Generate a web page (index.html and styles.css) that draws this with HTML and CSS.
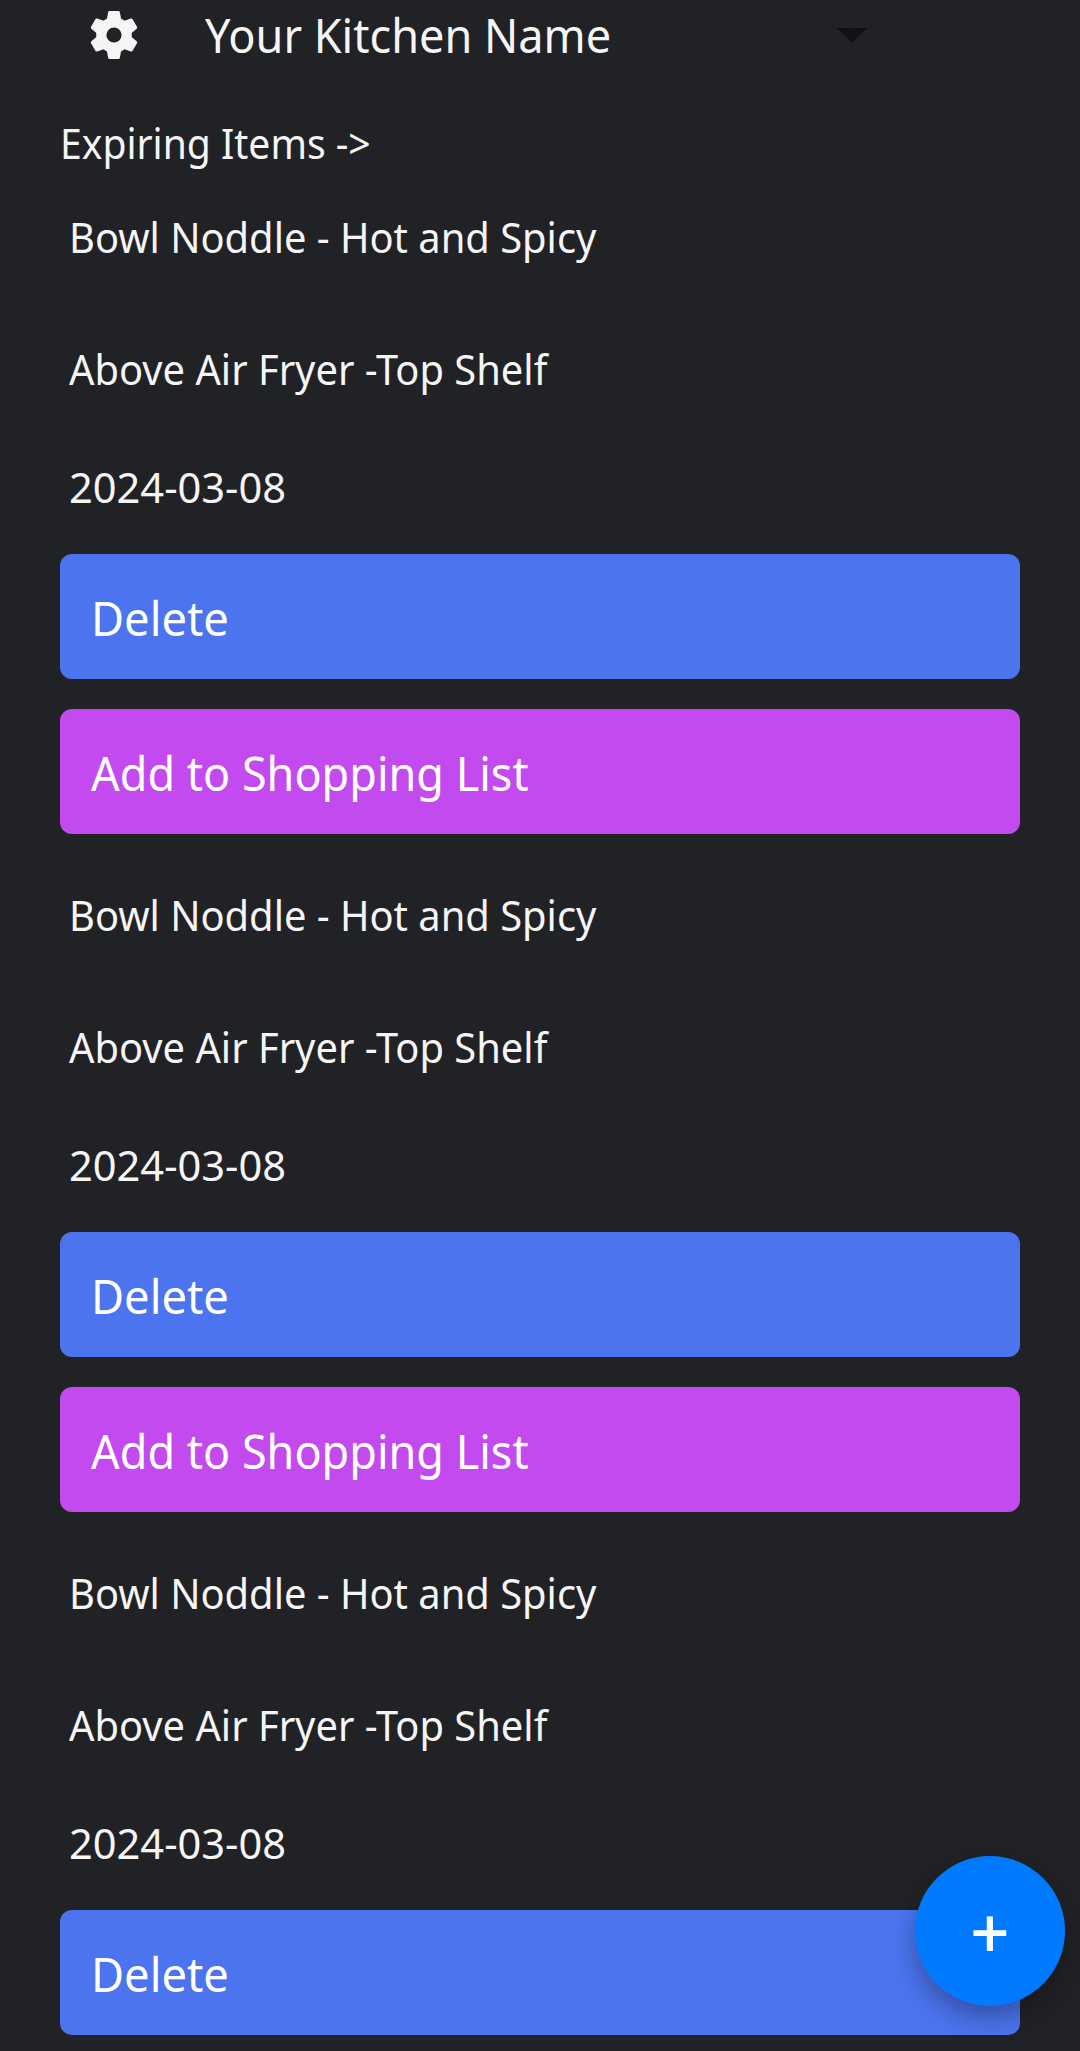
FILE: index.html
```
<!DOCTYPE html>
<html lang="en">
<head>
<meta charset="utf-8">
<title>Kitchen</title>
<link rel="stylesheet" href="styles.css">
</head>
<body>
<header class="topbar">
  <svg class="gear" viewBox="-30 -30 60 60" aria-hidden="true">
    <defs><path id="teeth" d="M-4.4-22.5H4.4L5.6-16V16L4.4 22.5H-4.4L-5.6 16V-16z"/></defs>
    <use href="#teeth"/>
    <use href="#teeth" transform="rotate(60)"/>
    <use href="#teeth" transform="rotate(120)"/>
    <circle class="hub" r="17.8"/>
    <circle class="hole" r="7.6"/>
  </svg>
  <span class="kitchen">Your Kitchen Name</span>
  <svg class="caret" viewBox="0 0 30 15" aria-hidden="true"><path d="M0 0h30L15 15z"/></svg>
</header>
<main class="content">
  <h1 class="section"><span>Expiring Items -&gt;</span></h1>
  <article class="item">
    <p class="name"><span>Bowl Noddle - Hot and Spicy</span></p>
    <p class="place"><span>Above Air Fryer -Top Shelf</span></p>
    <p class="date"><span>2024-03-08</span></p>
    <button class="btn delete"><span>Delete</span></button>
    <button class="btn add"><span>Add to Shopping List</span></button>
  </article>
  <article class="item">
    <p class="name"><span>Bowl Noddle - Hot and Spicy</span></p>
    <p class="place"><span>Above Air Fryer -Top Shelf</span></p>
    <p class="date"><span>2024-03-08</span></p>
    <button class="btn delete"><span>Delete</span></button>
    <button class="btn add"><span>Add to Shopping List</span></button>
  </article>
  <article class="item">
    <p class="name"><span>Bowl Noddle - Hot and Spicy</span></p>
    <p class="place"><span>Above Air Fryer -Top Shelf</span></p>
    <p class="date"><span>2024-03-08</span></p>
    <button class="btn delete"><span>Delete</span></button>
  </article>
</main>
<button class="fab">+</button>
</body>
</html>
```
FILE: styles.css
```
* { box-sizing: border-box; }
body {
  margin: 0;
  height: 2051px;
  overflow: hidden;
  background: #212226;
  color: #f5f5f5;
  font: 42px/60px "Noto Sans", sans-serif;
}
h1, p { margin: 0; font-size: 42px; font-weight: 400; white-space: nowrap; }
h1 span, p span, .btn span, .kitchen {
  display: inline-block;
  transform-origin: 0 50%;
}
.topbar {
  display: flex;
  align-items: center;
  height: 70px;
  padding-left: 84px;
}
.gear {
  flex: none;
  width: 60px;
  height: 60px;
  fill: #f5f5f5;
  stroke: #f5f5f5;
  stroke-width: 3;
  stroke-linejoin: round;
}
.gear .hub { stroke: none; }
.gear .hole { fill: #212226; stroke: none; }
.kitchen {
  width: 632px;
  margin-left: 61px;
  font-size: 48px;
  white-space: nowrap;
  transform: scaleX(.939);
}
.caret { width: 30px; height: 15px; fill: #111214; margin-top: 1px; }
.content { padding: 43px 60px 0; }
.section span { transform: scaleX(.93); }
.item { margin-top: 34px; }
.item + .item { margin-top: 50.6px; }
.item p { padding-left: 9px; }
.name span { transform: scaleX(.949); }
.place { margin-top: 72px; }
.place span { transform: scaleX(.949); }
.date { margin: 58px 0 37px; }
.date span { transform: scaleX(.99); }
.btn {
  display: flex;
  align-items: center;
  width: 100%;
  height: 125.4px;
  padding: 2px 0 0 30.5px;
  border: 0;
  border-radius: 12px;
  color: #fff;
  font: 48px/60px "Noto Sans", sans-serif;
}
.delete { background: #4b74ee; }
.delete span { transform: scaleX(.945); }
.add { margin-top: 29.6px; background: #c34aee; }
.add span { transform: scaleX(.937); }
.fab {
  position: fixed;
  right: 15px;
  bottom: 45px;
  width: 150px;
  height: 150px;
  padding: 4px 0 0;
  border: 0;
  border-radius: 50%;
  background: #007bff;
  color: #fff;
  font: 67px/146px Roboto, sans-serif;
  box-shadow: 0 12px 24px rgba(0, 0, 0, .3);
}
```
